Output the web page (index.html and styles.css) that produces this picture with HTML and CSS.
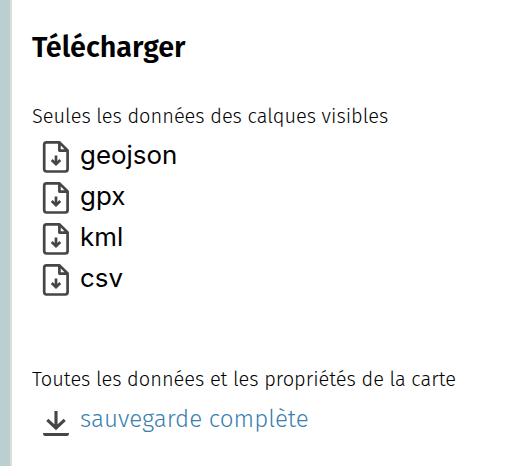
FILE: index.html
```html
<!DOCTYPE html>
<html lang="fr">
<head>
<meta charset="utf-8">
<title>Télécharger</title>
<link rel="stylesheet" href="styles.css">
</head>
<body>
<svg class="defs" width="0" height="0" aria-hidden="true">
  <symbol id="file" viewBox="0 0 28 34">
    <path d="M4.3 2.4H17.5L25.6 10.5V29Q25.6 31.5 23.2 31.5H4.5Q2.2 31.5 2.2 29V4.7Q2.2 2.4 4.5 2.4ZM17.4 3V10.6H25" fill="none" stroke="#464646" stroke-width="2.7" stroke-linejoin="round"/>
    <path d="M14 15.5V24M9.7 20L14 24.2L18.3 20" fill="none" stroke="#464646" stroke-width="2.7"/>
  </symbol>
</svg>
<main class="panel">
  <h3>Télécharger</h3>
  <h4>Seules les données des calques visibles</h4>
  <ul class="formats">
    <li><svg class="icon"><use href="#file"/></svg><span>geojson</span></li>
    <li><svg class="icon"><use href="#file"/></svg><span>gpx</span></li>
    <li><svg class="icon"><use href="#file"/></svg><span>kml</span></li>
    <li><svg class="icon"><use href="#file"/></svg><span>csv</span></li>
  </ul>
  <h4>Toutes les données et les propriétés de la carte</h4>
  <a class="backup"><svg class="icon" viewBox="0 0 28 34"><path d="M14 8V25M5.3 16.8L14 25L22.7 16.8" fill="none" stroke="#464646" stroke-width="3.1"/><path d="M1 30H27Q27 33 25 33H3Q1 33 1 30Z" fill="#464646"/></svg><span>sauvegarde complète</span></a>
</main>
</body>
</html>
```
FILE: styles.css
```css
* { box-sizing: border-box; }
body { margin: 0; background: #b9cfd0; overflow: hidden; }
.defs { display: none; }
.panel {
  margin-left: 10px;
  height: 466px;
  padding: 28px 0 0 20px;
  border-left: 2px solid #dcdcdc;
  background: #fff;
  color: #000;
  font-family: "Fira Sans", "Noto Sans", "Open Sans", sans-serif;
  white-space: nowrap;
}
h3, h4, ul { margin: 0; padding: 0; }
h3 { height: 76px; font-size: 28.8px; line-height: 40px; font-weight: 600; }
h4 { height: 32px; font-size: 20px; line-height: 25px; font-weight: 300; }
.formats { list-style: none; height: 231px; }
.formats li, .backup { display: flex; height: 41px; padding-left: 10px; gap: 10px; }
.formats li { font: 400 25.9px/38px Inter, sans-serif; }
.icon { width: 28px; height: 34px; margin-top: 4px; flex: none; }
.backup { font-size: 24.15px; line-height: 39px; font-weight: 300; color: #3a7fb0; }
```
